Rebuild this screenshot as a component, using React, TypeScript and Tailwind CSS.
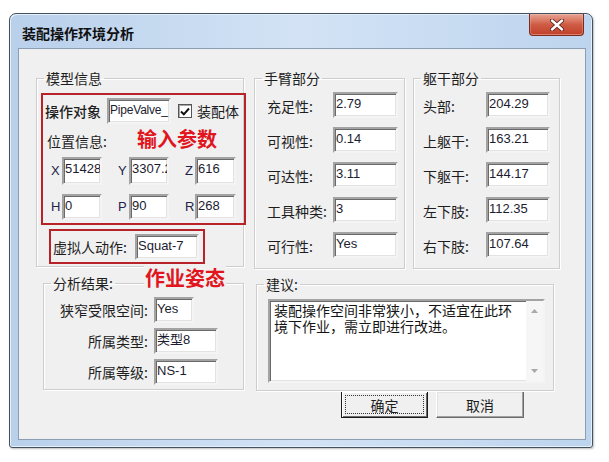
const cjk = "font-['Noto_Sans_CJK_SC','Liberation_Sans',sans-serif]";

function Box({ value, className }: { value: string; className: string }) {
  return (
    <div
      className={`h-[26px] shrink-0 overflow-hidden whitespace-nowrap border-2 border-t-[#a3a3a3] border-l-[#a3a3a3] border-r-[#f4f4f4] border-b-[#f4f4f4] bg-white pl-[1px] font-['Liberation_Sans','Noto_Sans_CJK_SC',sans-serif] leading-[20px] text-[#1c1c30] shadow-[inset_1px_1px_0_#6a6a6a,inset_-1px_-1px_0_#e3e3e3] ${className}`}
    >
      {value}
    </div>
  );
}

function Group({
  title,
  className,
  children,
}: {
  title: string;
  className: string;
  children?: React.ReactNode;
}) {
  return (
    <fieldset
      className={`relative shrink-0 border border-[#cdcdcd] shadow-[inset_1px_1px_0_#fff,1px_1px_0_#fff] ${className}`}
    >
      <legend className="ml-[7px] px-[2px] text-[14px] leading-[18px] text-[#1e1e1e]">{title}</legend>
      {children}
    </fieldset>
  );
}

function Row({ label, value, labelW, boxW }: { label: string; value: string; labelW: string; boxW: string }) {
  return (
    <div className="flex h-[26px] items-center">
      <span className={`${labelW} shrink-0 pt-[2px] text-[14px] leading-[20px]`}>{label}</span>
      <Box value={value} className={`text-[13px] ${boxW}`} />
    </div>
  );
}

export default function App() {
  const arm = [
    ["充足性:", "2.79"],
    ["可视性:", "0.14"],
    ["可达性:", "3.11"],
    ["工具种类:", "3"],
    ["可行性:", "Yes"],
  ];
  const trunk = [
    ["头部:", "204.29"],
    ["上躯干:", "163.21"],
    ["下躯干:", "144.17"],
    ["左下肢:", "112.35"],
    ["右下肢:", "107.64"],
  ];

  return (
    <div className={`h-[462px] w-[609px] overflow-hidden bg-white ${cjk} text-[#1e1e1e]`}>
      {/* window frame */}
      <div className="ml-[9px] mt-[13px] h-[435px] w-[584px] rounded-t-[7px] rounded-b-[3px] border border-[#44525f] bg-gradient-to-r from-[#b9d0eb] via-[#d3e3f5] to-[#bdd4ee] shadow-[inset_1px_1px_0_#e6f0fb,inset_-1px_-1px_0_#e6f0fb,1px_1px_2px_#00000040]">
        <div className="relative h-[34px]">
          <div className="pl-[12px] pt-[9px] text-[14px] font-bold leading-[20px] text-[#101010]">装配操作环境分析</div>
          <div className="absolute right-[8px] top-0 flex h-[22px] w-[55px] items-center justify-center rounded-b-[4px] border border-t-0 border-[#7a2c22] bg-gradient-to-b from-[#e7a493] via-[#cf5c45] to-[#c13f29] shadow-[inset_0_-1px_0_#e0806c,inset_0_0_0_1px_#ffffff30]">
            <svg width="14" height="12" viewBox="0 0 14 12">
              <path d="M2 1.5 L12 10.5 M12 1.5 L2 10.5" stroke="#5a2118" strokeWidth="4.2" strokeLinecap="round" />
              <path d="M2 1.5 L12 10.5 M12 1.5 L2 10.5" stroke="#ffffff" strokeWidth="2.4" strokeLinecap="round" />
            </svg>
          </div>
        </div>

        {/* client area */}
        <div className="ml-[8px] h-[392px] w-[568px] border border-[#8b9db2] bg-[#f0f0f0] pt-[20px]">
          <div className="flex h-[201px] items-start">
            <Group title="模型信息" className="ml-[17px] h-[198px] w-[208px]">
              <div className="ml-[4px] mr-[-3px] mt-[6px] h-[132px] border-2 border-[#b8232a] pl-[2px]">
                <div className="flex h-[30px] items-center pt-[2px]">
                  <span className="w-[56px] shrink-0 text-[14px] font-medium leading-[20px]">操作对象</span>
                  <Box value="PipeValve_" className="ml-[6px] w-[64px] text-[12px] tracking-[-0.2px]" />
                  <div className="ml-[7px] flex h-[14px] w-[14px] items-center justify-center border border-[#555] bg-white shadow-[inset_1px_1px_0_#aaa]">
                    <svg width="10" height="9" viewBox="0 0 10 9">
                      <path d="M1 4.5 L3.8 7.3 L9 1.5" fill="none" stroke="#111" strokeWidth="2" />
                    </svg>
                  </div>
                  <span className="ml-[5px] text-[14px] leading-[20px]">装配体</span>
                </div>
                <div className="flex h-[32px] items-center">
                  <span className="ml-[2px] w-[63px] text-[14px] leading-[20px]">位置信息:</span>
                  <span className="ml-[27px] mt-[-5px] text-[20px] font-bold leading-[24px] text-[#e0151d]">输入参数</span>
                </div>
                <div className="flex h-[28px] items-center font-['Liberation_Sans',sans-serif] text-[13px] text-[#23234a]">
                  <span className="ml-[6px] w-[11px]">X</span>
                  <Box value="51428" className="h-[28px] w-[40px] text-[13px]" />
                  <span className="ml-[16px] w-[11px]">Y</span>
                  <Box value="3307.2" className="h-[28px] w-[40px] text-[13px]" />
                  <span className="ml-[16px] w-[10px]">Z</span>
                  <Box value="616" className="h-[28px] w-[41px] text-[13px]" />
                </div>
                <div className="mt-[9px] flex h-[26px] items-center font-['Liberation_Sans',sans-serif] text-[13px] text-[#23234a]">
                  <span className="ml-[6px] w-[11px]">H</span>
                  <Box value="0" className="w-[40px] text-[13px]" />
                  <span className="ml-[16px] w-[11px]">P</span>
                  <Box value="90" className="w-[40px] text-[13px]" />
                  <span className="ml-[16px] w-[10px]">R</span>
                  <Box value="268" className="w-[41px] text-[13px]" />
                </div>
              </div>
              <div className="ml-[12px] mt-[4px] flex h-[35px] w-[156px] items-center border-2 border-[#b8232a] pl-[2px]">
                <span className="w-[82px] shrink-0 text-[14px] leading-[20px]">虚拟人动作:</span>
                <Box value="Squat-7" className="w-[64px] text-[13px]" />
              </div>
            </Group>

            <Group title="手臂部分" className="ml-[10px] h-[200px] w-[151px]">
              <div className="ml-[12px] mt-[5px] flex flex-col gap-[9px]">
                {arm.map(([l, v]) => (
                  <Row key={l} label={l} value={v} labelW="w-[66px]" boxW="w-[65px]" />
                ))}
              </div>
            </Group>

            <Group title="躯干部分" className="ml-[8px] h-[200px] w-[147px]">
              <div className="ml-[9px] mt-[5px] flex flex-col gap-[9px]">
                {trunk.map(([l, v]) => (
                  <Row key={l} label={l} value={v} labelW="w-[63px]" boxW="w-[64px]" />
                ))}
              </div>
            </Group>
          </div>

          <div className="mt-[4px] flex items-start">
            <Group title="分析结果:" className="ml-[24px] h-[116px] w-[201px]">
              {/* annotation laid over the group border */}
              <span className="absolute left-[100px] top-[-26px] bg-[#f0f0f0] px-[1px] text-[20px] font-bold leading-[24px] text-[#e0151d]">
                作业姿态
              </span>
              <div className="mt-[5px] flex flex-col gap-[5px]">
                <div className="flex h-[26px] items-center">
                  <span className="w-[104px] shrink-0 text-right text-[14px] leading-[20px]">狭窄受限空间:</span>
                  <Box value="Yes" className="ml-[6px] w-[40px] text-[13px]" />
                </div>
                <div className="flex h-[26px] items-center">
                  <span className="w-[104px] shrink-0 text-right text-[14px] leading-[20px]">所属类型:</span>
                  <Box value="类型8" className="ml-[6px] w-[64px] text-[13px]" />
                </div>
                <div className="flex h-[26px] items-center">
                  <span className="w-[104px] shrink-0 text-right text-[14px] leading-[20px]">所属等级:</span>
                  <Box value="NS-1" className="ml-[6px] w-[64px] text-[13px]" />
                </div>
              </div>
            </Group>

            <div className="ml-[12px] w-[298px] shrink-0">
              <Group title="建议:" className="mt-[1px] h-[116px] w-[298px]">
                <div className="ml-[11px] mt-[6px] flex h-[84px] w-[277px] border-2 border-t-[#a3a3a3] border-l-[#a3a3a3] border-r-[#f4f4f4] border-b-[#f4f4f4] bg-white shadow-[inset_1px_1px_0_#6a6a6a,inset_-1px_-1px_0_#e3e3e3]">
                  <div className="flex-1 pl-[4px] pt-[1px] text-[14px] leading-[16px] text-[#141414]">
                    <div>装配操作空间非常狭小，不适宜在此环</div>
                    <div>境下作业，需立即进行改进。</div>
                  </div>
                  <div className="flex w-[17px] flex-col items-center justify-between bg-[#f6f6f6] py-[8px]">
                    <svg width="7" height="4" viewBox="0 0 7 4">
                      <path d="M0 4 L3.5 0 L7 4 Z" fill="#a8a8a8" />
                    </svg>
                    <svg width="7" height="4" viewBox="0 0 7 4">
                      <path d="M0 0 L3.5 4 L7 0 Z" fill="#a8a8a8" />
                    </svg>
                  </div>
                </div>
              </Group>
              <div className="flex gap-[8px] pl-[85px]">
                <div className="flex h-[27px] w-[87px] items-center justify-center border border-[#1a1a1a] bg-[#f0f0f0] shadow-[inset_1px_1px_0_#fff,inset_-1px_-1px_0_#6b6b6b]">
                  <div className="flex h-[19px] w-[79px] items-center justify-center border border-dotted border-[#333] text-[14px] leading-[18px]">
                    确定
                  </div>
                </div>
                <div className="flex h-[27px] w-[88px] items-center justify-center border border-t-[#fff] border-l-[#fff] border-r-[#6b6b6b] border-b-[#6b6b6b] bg-[#f0f0f0] text-[14px] leading-[18px] shadow-[inset_-1px_-1px_0_#a0a0a0,inset_1px_1px_0_#e3e3e3]">
                  取消
                </div>
              </div>
            </div>
          </div>
        </div>
      </div>
    </div>
  );
}
